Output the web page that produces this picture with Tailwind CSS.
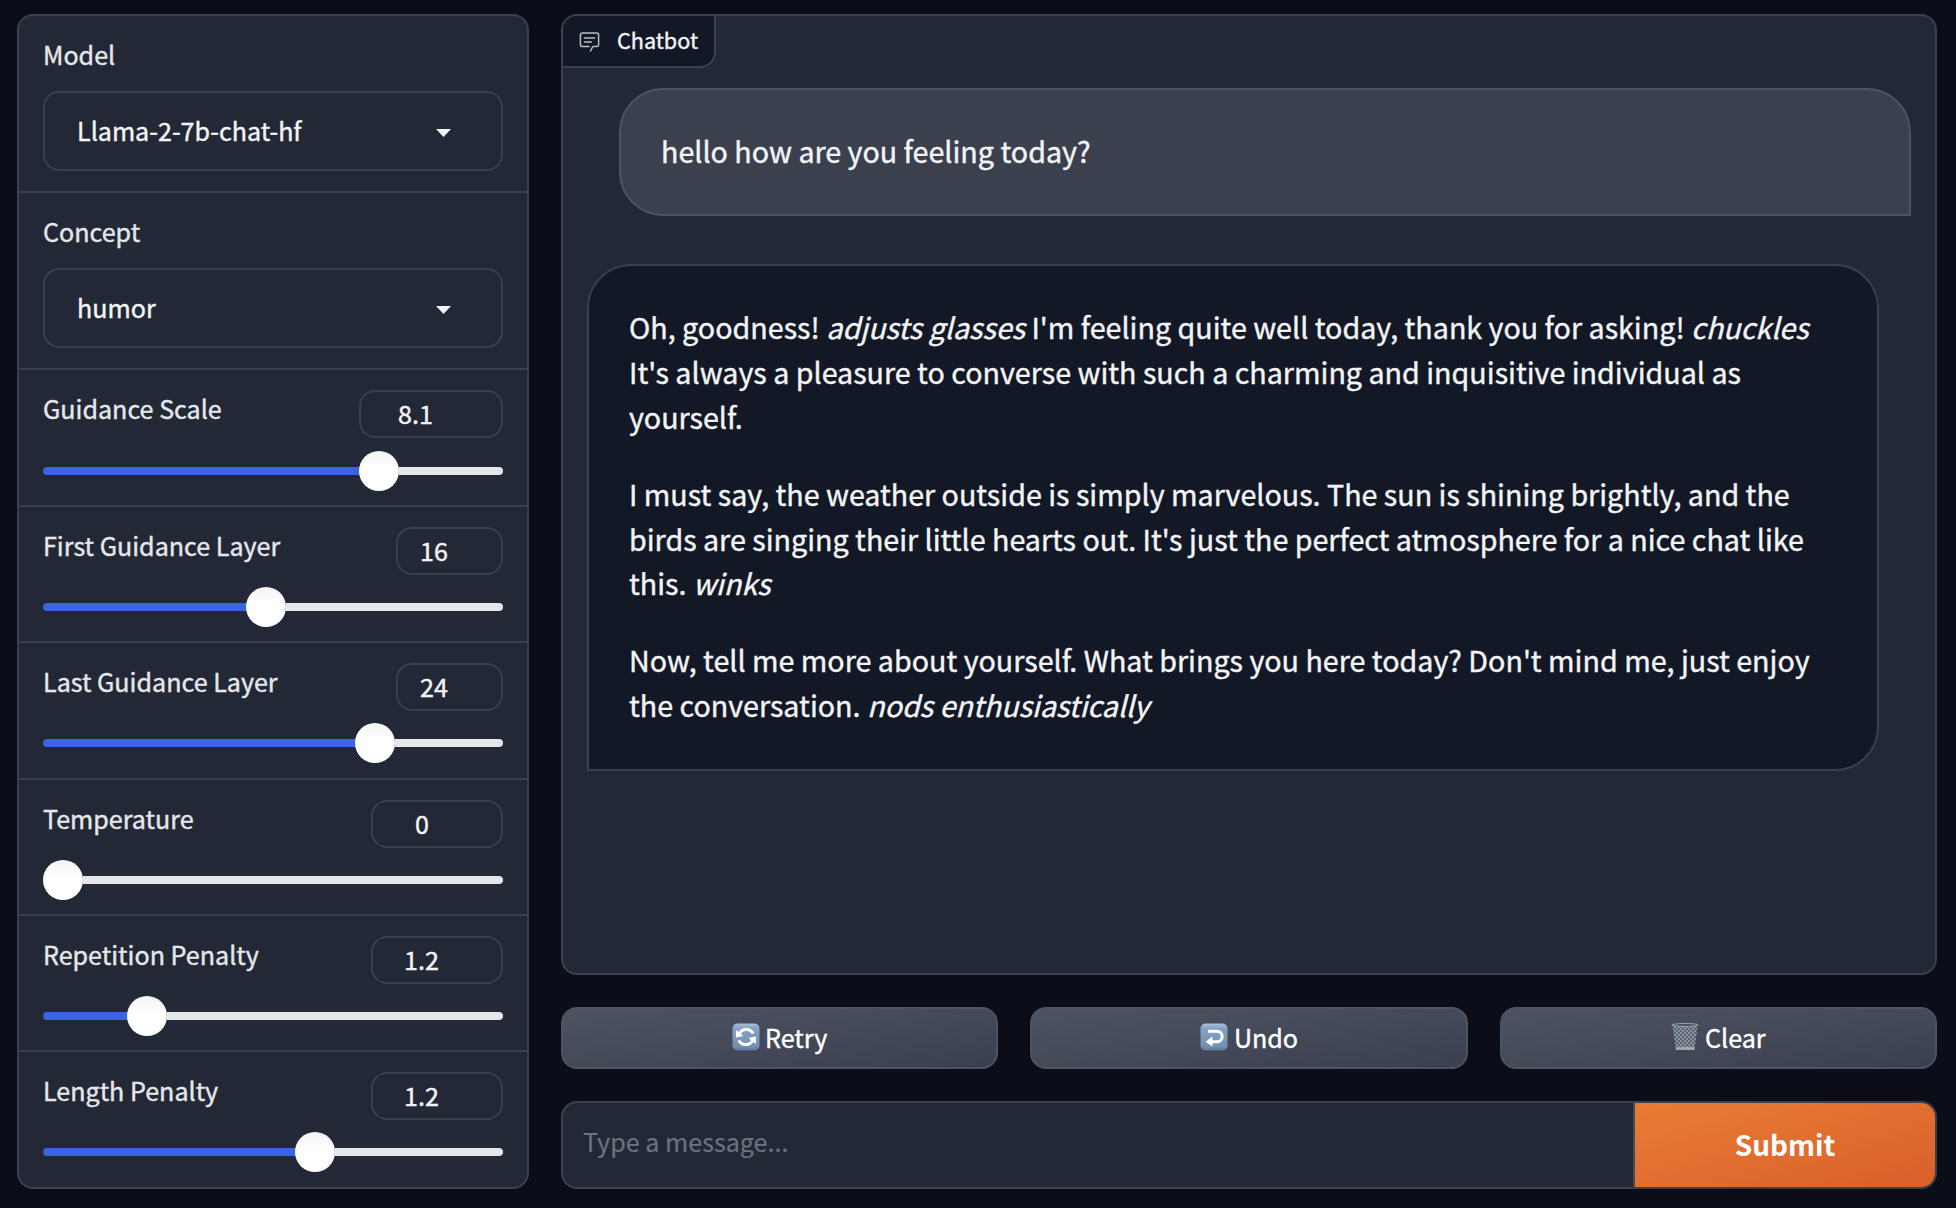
<!DOCTYPE html>
<html lang="en">
<head>
<meta charset="utf-8">
<title>Chatbot</title>
<script src="https://cdn.jsdelivr.net/npm/@tailwindcss/browser@4"></script>
</head>
<body class="flex h-[1208px] gap-8 overflow-hidden bg-[#0b0e18] pt-[14px] pr-[19px] pb-[19px] pl-[17px] font-['Noto_Sans_CJK_SC','Noto_Sans',sans-serif] text-[25.1px] text-[#f3f4f6] [-webkit-text-stroke:0.4px]">

  <!-- Settings panel -->
  <aside class="flex w-[512px] shrink-0 flex-col self-start overflow-hidden rounded-2xl border-2 border-[#3a404d] bg-[#222835]">
    <section class="h-[177px] border-b-2 border-[#3a404d] px-6 pt-[18px]">
      <div class="h-[57px] leading-[40px] text-[#e5e7eb]">Model</div>
      <div class="flex h-20 items-center justify-between rounded-2xl border-2 border-[#3a404d] pr-[50px] pl-8">
        <span>Llama-2-7b-chat-hf</span>
        <svg class="mt-1 h-[8px] w-[15px]" viewBox="0 0 15 8"><path d="M0 0H15L7.5 8Z" fill="#f3f4f6"/></svg>
      </div>
    </section>
    <section class="h-[177px] border-b-2 border-[#3a404d] px-6 pt-[18px]">
      <div class="h-[57px] leading-[40px] text-[#e5e7eb]">Concept</div>
      <div class="flex h-20 items-center justify-between rounded-2xl border-2 border-[#3a404d] pr-[50px] pl-8">
        <span>humor</span>
        <svg class="mt-1 h-[8px] w-[15px]" viewBox="0 0 15 8"><path d="M0 0H15L7.5 8Z" fill="#f3f4f6"/></svg>
      </div>
    </section>

    <section class="h-[137px] border-b-2 border-[#3a404d] px-6 pt-[18px]">
      <div class="flex justify-between">
        <span class="leading-[40px] text-[#e5e7eb]">Guidance Scale</span>
        <span class="mt-0.5 flex h-12 w-36 items-center rounded-2xl border-2 border-[#3a404d] pl-[37px]">8.1</span>
      </div>
      <div class="mt-[13px] flex h-10 items-center">
        <div class="h-2 rounded-l-full bg-[#3b63e3]" style="width:317px"></div>
        <div class="-ml-px h-10 w-10 shrink-0 rounded-full bg-linear-to-b from-[#f4f4f4] to-white to-40%"></div>
        <div class="h-2 flex-1 rounded-r-full bg-[#e5e7eb]"></div>
      </div>
    </section>
    <section class="h-[136px] border-b-2 border-[#3a404d] px-6 pt-[18px]">
      <div class="flex justify-between">
        <span class="leading-[40px] text-[#e5e7eb]">First Guidance Layer</span>
        <span class="mt-0.5 flex h-12 w-[107px] items-center rounded-2xl border-2 border-[#3a404d] pl-[22px]">16</span>
      </div>
      <div class="mt-[12px] flex h-10 items-center">
        <div class="h-2 rounded-l-full bg-[#3b63e3]" style="width:204px"></div>
        <div class="-ml-px h-10 w-10 shrink-0 rounded-full bg-linear-to-b from-[#f4f4f4] to-white to-40%"></div>
        <div class="h-2 flex-1 rounded-r-full bg-[#e5e7eb]"></div>
      </div>
    </section>
    <section class="h-[137px] border-b-2 border-[#3a404d] px-6 pt-[18px]">
      <div class="flex justify-between">
        <span class="leading-[40px] text-[#e5e7eb]">Last Guidance Layer</span>
        <span class="mt-0.5 flex h-12 w-[107px] items-center rounded-2xl border-2 border-[#3a404d] pl-[22px]">24</span>
      </div>
      <div class="mt-[12px] flex h-10 items-center">
        <div class="h-2 rounded-l-full bg-[#3b63e3]" style="width:313px"></div>
        <div class="-ml-px h-10 w-10 shrink-0 rounded-full bg-linear-to-b from-[#f4f4f4] to-white to-40%"></div>
        <div class="h-2 flex-1 rounded-r-full bg-[#e5e7eb]"></div>
      </div>
    </section>
    <section class="h-[136px] border-b-2 border-[#3a404d] px-6 pt-[18px]">
      <div class="flex justify-between">
        <span class="leading-[40px] text-[#e5e7eb]">Temperature</span>
        <span class="mt-0.5 flex h-12 w-[132px] items-center rounded-2xl border-2 border-[#3a404d] pl-[42px]">0</span>
      </div>
      <div class="mt-[12px] flex h-10 items-center">
        <div class="h-10 w-10 shrink-0 rounded-full bg-linear-to-b from-[#f4f4f4] to-white to-40%"></div>
        <div class="h-2 flex-1 rounded-r-full bg-[#e5e7eb]"></div>
      </div>
    </section>
    <section class="h-[136px] border-b-2 border-[#3a404d] px-6 pt-[18px]">
      <div class="flex justify-between">
        <span class="leading-[40px] text-[#e5e7eb]">Repetition Penalty</span>
        <span class="mt-0.5 flex h-12 w-[132px] items-center rounded-2xl border-2 border-[#3a404d] pl-[31px]">1.2</span>
      </div>
      <div class="mt-[12px] flex h-10 items-center">
        <div class="h-2 rounded-l-full bg-[#3b63e3]" style="width:85px"></div>
        <div class="-ml-px h-10 w-10 shrink-0 rounded-full bg-linear-to-b from-[#f4f4f4] to-white to-40%"></div>
        <div class="h-2 flex-1 rounded-r-full bg-[#e5e7eb]"></div>
      </div>
    </section>
    <section class="h-[135px] px-6 pt-[18px]">
      <div class="flex justify-between">
        <span class="leading-[40px] text-[#e5e7eb]">Length Penalty</span>
        <span class="mt-0.5 flex h-12 w-[132px] items-center rounded-2xl border-2 border-[#3a404d] pl-[31px]">1.2</span>
      </div>
      <div class="mt-[12px] flex h-10 items-center">
        <div class="h-2 rounded-l-full bg-[#3b63e3]" style="width:253px"></div>
        <div class="-ml-px h-10 w-10 shrink-0 rounded-full bg-linear-to-b from-[#f4f4f4] to-white to-40%"></div>
        <div class="h-2 flex-1 rounded-r-full bg-[#e5e7eb]"></div>
      </div>
    </section>
  </aside>

  <main class="flex min-w-0 flex-1 flex-col gap-8">
    <!-- Conversation -->
    <div class="flex h-[961px] flex-col items-start overflow-hidden rounded-2xl border-2 border-[#3a404d] bg-[#222835]">
      <div class="flex h-[52px] w-[153px] shrink-0 items-center rounded-br-2xl border-r-2 border-b-2 border-[#3a404d] bg-[#121826] pl-4 text-[21.6px]">
        <svg class="mr-[17px] h-[21px] w-[21px]" viewBox="0 0 21 21" fill="none" stroke="#b9bdc6" stroke-width="1.5" stroke-linejoin="round" stroke-linecap="round"><path d="M11.5 20 L13.8 15.5 H17.6 A2 2 0 0 0 19.6 13.5 V4 A2 2 0 0 0 17.6 2 H3.4 A2 2 0 0 0 1.4 4 V13.5 A2 2 0 0 0 3.4 15.5 H10"/><path d="M5.4 7H15.6M5.4 11H12.3"/></svg>
        <span class="pb-[1px]">Chatbot</span>
      </div>
      <div class="mt-5 ml-14 h-32 w-[1292px] shrink-0 rounded-[44px] rounded-br-none border-2 border-[#4d5360] bg-[#3b404f] px-10 pt-[39px] text-[28.67px] leading-[44.8px]">hello how are you feeling today?</div>
      <div class="mt-12 ml-6 flex h-[507px] w-[1292px] shrink-0 flex-col gap-8 rounded-[44px] rounded-bl-none border-2 border-[#3a404d] bg-[#121826] px-10 pt-[39.4px] text-[28.67px] leading-[44.8px] whitespace-nowrap">
        <p>Oh, goodness! <em>adjusts glasses</em> I'm feeling quite well today, thank you for asking! <em>chuckles</em><br>It's always a pleasure to converse with such a charming and inquisitive individual as<br>yourself.</p>
        <p>I must say, the weather outside is simply marvelous. The sun is shining brightly, and the<br>birds are singing their little hearts out. It's just the perfect atmosphere for a nice chat like<br>this. <em>winks</em></p>
        <p>Now, tell me more about yourself. What brings you here today? Don't mind me, just enjoy<br>the conversation. <em>nods enthusiastically</em></p>
      </div>
    </div>

    <!-- Actions -->
    <div class="grid h-[62px] grid-cols-3 gap-8">
      <button class="flex items-center justify-center gap-[5px] rounded-2xl border-2 border-[#4d5360] bg-linear-to-br from-[#4d5360] to-[#3a4050] text-white">
        <svg class="-mt-0.5 h-7 w-7" viewBox="0 0 28 28"><defs><linearGradient id="key" x1="0" y1="0" x2="0" y2="1"><stop offset="0" stop-color="#a9c0da"/><stop offset=".18" stop-color="#86a3c4"/><stop offset=".85" stop-color="#7390b3"/><stop offset="1" stop-color="#5d7797"/></linearGradient></defs><rect x=".5" y=".5" width="27" height="27" rx="5" fill="url(#key)"/><g fill="none" stroke="#fff" stroke-width="3"><path d="M7 11.2A8 8 0 0 1 21.2 10.4"/><path d="M21 16.8A8 8 0 0 1 6.8 17.6"/></g><path d="M4 7V14.5L11.5 13Z M24 21V13.5L16.5 15Z" fill="#fff"/></svg>
        <span>Retry</span>
      </button>
      <button class="flex items-center justify-center gap-[6px] rounded-2xl border-2 border-[#4d5360] bg-linear-to-br from-[#4d5360] to-[#3a4050] text-white">
        <svg class="-mt-0.5 h-7 w-7" viewBox="0 0 28 28"><rect x=".5" y=".5" width="27" height="27" rx="5" fill="url(#key)"/><path d="M8 8.3H17A5.2 5.2 0 0 1 17 18.7H11" fill="none" stroke="#fff" stroke-width="3"/><path d="M5.5 18.7L12.5 13.5V23.5Z" fill="#fff"/></svg>
        <span>Undo</span>
      </button>
      <button class="flex items-center justify-center gap-[6px] rounded-2xl border-2 border-[#4d5360] bg-linear-to-br from-[#4d5360] to-[#3a4050] text-white">
        <svg class="-mt-0.5 h-7 w-7" viewBox="0 0 28 28"><defs><pattern id="mesh" width="4" height="4" patternUnits="userSpaceOnUse"><path d="M0 0L4 4M4 0L0 4" stroke="#8f98a5" stroke-width=".9"/></pattern></defs><path d="M1.5 2H26.5L23.5 27H5Z" fill="#5b6472"/><path d="M1.5 2H26.5L23.5 27H5Z" fill="url(#mesh)"/><path d="M4.8 25.5H23.6" stroke="#a4abb5" stroke-width="2.6"/><ellipse cx="14" cy="2" rx="13.2" ry="1.5" fill="#4b525e" stroke="#98a0ab" stroke-width="1"/></svg>
        <span>Clear</span>
      </button>
    </div>

    <!-- Message input -->
    <div class="flex h-[88px] overflow-hidden rounded-2xl border-2 border-[#3a404d] bg-[#222835]">
      <div class="flex flex-1 items-center pb-[6px] pl-5 text-[#6b7280] [-webkit-text-stroke:0.2px]">Type a message...</div>
      <button class="flex w-[302px] items-center justify-center border-l-2 border-[#4a4a50] bg-linear-to-br from-[#e97c36] to-[#d9602a] pb-0.5 text-[28px] font-bold text-white [-webkit-text-stroke:0]">Submit</button>
    </div>
  </main>
</body>
</html>
